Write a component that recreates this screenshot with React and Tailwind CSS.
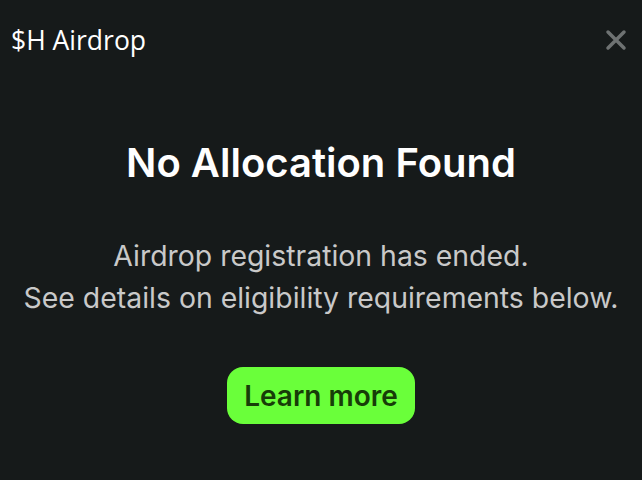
import React from 'react';

const App = () => {
  return (
    <div className="w-[642px] h-[480px] bg-[#161a1a] flex flex-col">
      {/* Header */}
      <div className="flex items-center justify-between pl-[11px] pr-[14px] pt-[24px]">
        <h1 className="text-[26.5px] leading-[32px] text-white font-['Open_Sans',sans-serif]">
          $H Airdrop
        </h1>
        <button className="text-[#6e7272]">
          <svg width="24" height="24" viewBox="0 0 24 24" fill="none" stroke="currentColor" strokeWidth="3.5" strokeLinecap="round">
            <path d="M4 4L20 20M20 4L4 20" />
          </svg>
        </button>
      </div>

      {/* Body */}
      <div className="flex flex-col items-center font-['Inter',sans-serif] mt-[83px]">
        <h2 className="text-[40px] leading-[48px] font-semibold text-white">
          No Allocation Found
        </h2>
        <p className="mt-[48px] text-[28.4px] leading-[42px] text-[#c9c9c9] text-center">
          Airdrop registration has ended.
          <br />
          See details on eligibility requirements below.
        </p>
        <button className="mt-[48px] h-[57px] px-[17px] rounded-[16px] bg-[#6aff3a] text-[#173d08] text-[28px] font-semibold">
          Learn more
        </button>
      </div>
    </div>
  );
};

export default App;
